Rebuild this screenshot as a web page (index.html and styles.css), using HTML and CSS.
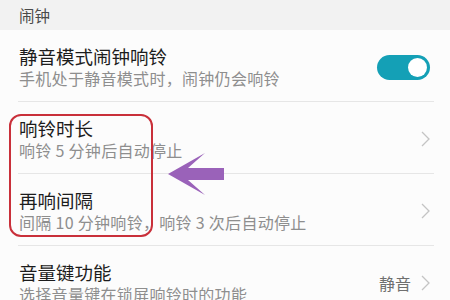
FILE: index.html
```html
<!DOCTYPE html>
<html lang="zh-CN">
<head>
  <meta charset="UTF-8" />
  <meta name="viewport" content="width=device-width, initial-scale=1.0"/>
  <title>闹钟设置</title>
  <link rel="stylesheet" href="styles.css">
</head>
<body>
  <div class="screen">
    <div class="section-title">闹钟</div>

    <ul class="list">
      <li class="item">
        <div class="text">
          <div class="title">静音模式闹钟响铃</div>
          <div class="desc">手机处于静音模式时，闹钟仍会响铃</div>
        </div>
        <span class="switch on"><span class="knob"></span></span>
      </li>
      <li class="item">
        <div class="text">
          <div class="title">响铃时长</div>
          <div class="desc">响铃 5 分钟后自动停止</div>
        </div>
        <svg class="chevron" width="9" height="16" viewBox="0 0 9 16"><path d="M1 1 L8 8 L1 15" fill="none" stroke="#c4c4c4" stroke-width="1.3"/></svg>
      </li>
      <li class="item">
        <div class="text">
          <div class="title">再响间隔</div>
          <div class="desc">间隔 10 分钟响铃，响铃 3 次后自动停止</div>
        </div>
        <svg class="chevron" width="9" height="16" viewBox="0 0 9 16"><path d="M1 1 L8 8 L1 15" fill="none" stroke="#c4c4c4" stroke-width="1.3"/></svg>
      </li>
      <li class="item">
        <div class="text">
          <div class="title">音量键功能</div>
          <div class="desc">选择音量键在锁屏响铃时的功能</div>
        </div>
        <span class="value">静音</span>
        <svg class="chevron" width="9" height="16" viewBox="0 0 9 16"><path d="M1 1 L8 8 L1 15" fill="none" stroke="#c4c4c4" stroke-width="1.3"/></svg>
      </li>
    </ul>

    <!-- annotations drawn over the screenshot -->
    <div class="mark"></div>
    <svg class="arrow" width="57" height="43" viewBox="0 0 57 43">
      <polygon points="0,21 37,0 20,15 56,15 56,27 20,27 37,42" fill="#9a62b9"/>
    </svg>
  </div>
</body>
</html>
```

FILE: styles.css
```css
body {
  margin: 0;
  font-family: "Noto Sans CJK SC", "Noto Sans", sans-serif;
  background-color: #fcfcfc;
  color: #1c1c1c;
}
.screen {
  position: relative;
  width: 450px;
  height: 300px;
  overflow: hidden;
  background: #fcfcfc;
}
.section-title {
  height: 30px;
  line-height: 30px;
  padding-left: 19px;
  background-color: #f2f2f2;
  font-size: 15.5px;
  color: #4a4a4a;
}
.list {
  list-style: none;
  margin: 0;
  padding: 0;
}
.item {
  display: flex;
  align-items: center;
  margin: 0 16px 0 18px;
  padding: 15px 4px 12px 1px;
  border-bottom: 1px solid #e6e6e6;
}
.text {
  flex: 1;
}
.title {
  font-size: 18.5px;
  line-height: 22px;
  color: #1c1c1c;
}
.desc {
  font-size: 16px;
  line-height: 22px;
  letter-spacing: 0.3px;
  color: #8e8e8e;
  white-space: nowrap;
}
.switch {
  display: flex;
  align-items: center;
  justify-content: flex-end;
  width: 53px;
  height: 25px;
  padding: 0 3px;
  box-sizing: border-box;
  border-radius: 13px;
  background-color: #14a0b6;
}
.knob {
  width: 19px;
  height: 19px;
  border-radius: 50%;
  background: #fff;
}
.chevron {
  display: block;
}
.value {
  font-size: 16px;
  color: #6f6f6f;
  margin-right: 10px;
}
.mark {
  position: absolute;
  left: 9px;
  top: 114px;
  width: 140px;
  height: 119px;
  border: 2px solid #c9303a;
  border-radius: 12px;
}
.arrow {
  position: absolute;
  left: 168px;
  top: 153px;
}
```
